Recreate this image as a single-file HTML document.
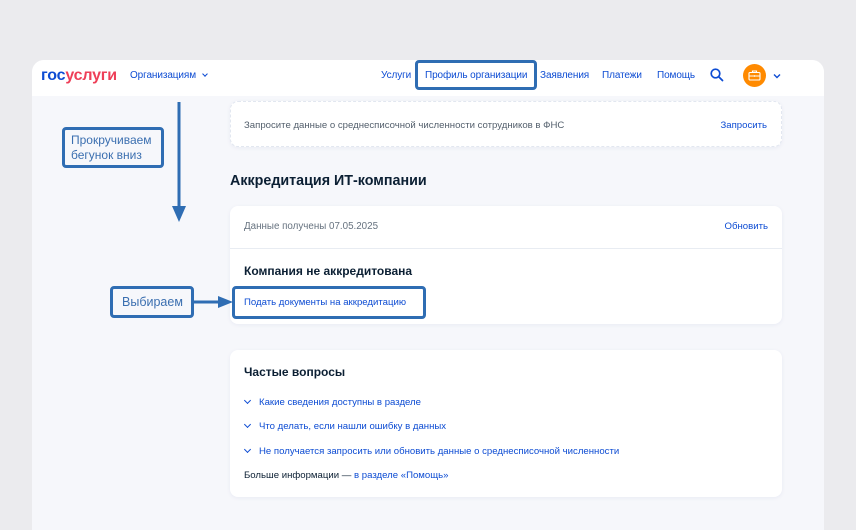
<!DOCTYPE html>
<html><head><meta charset="utf-8"><style>
*{margin:0;padding:0;box-sizing:border-box}
body{width:856px;height:522px;background:#ebebee;font-family:"Liberation Sans",sans-serif;position:relative;overflow:hidden;color:#0b1f33}
.win{position:absolute;left:32px;top:60px;width:792px;height:470px;background:#f6f7fb;border-radius:12px 12px 0 0;overflow:hidden}
.hdr{position:absolute;left:0;top:0;width:792px;height:36px;background:#fff}
.a{position:absolute;white-space:nowrap}
.nav{font-size:10px;color:#0d4cd3;top:10px;letter-spacing:-.1px}
.card{position:absolute;left:198px;width:552px;background:#fff;border-radius:8px;box-shadow:0 1px 4px rgba(0,40,120,.06)}
.lnk{color:#0d4cd3;font-size:9.6px}
.g{color:#66727f;font-size:9.8px}
.box{position:absolute;border:3px solid #2f6db3;border-radius:4px}
.ann{position:absolute;color:#3b6fb0;font-size:12px;line-height:15px}
.chev{display:inline-block;width:5px;height:5px;border-right:1.5px solid #0d4cd3;border-bottom:1.5px solid #0d4cd3;transform:rotate(45deg);margin-right:9px;position:relative;top:-2px}
</style></head><body>
<div class="win">
 <div class="hdr">
  <div class="a" style="left:9px;top:7px;font-size:16px;font-weight:bold;letter-spacing:-.2px"><span style="color:#0d4cd3">гос</span><span style="color:#ee3f58">услуги</span></div>
  <div class="a nav" style="left:98px">Организациям <span class="chev" style="width:4px;height:4px;margin-left:4px;margin-right:0"></span></div>
  <div class="a nav" style="left:349px">Услуги</div>
  <div class="a nav" style="left:393px">Профиль организации</div>
  <div class="a nav" style="left:508px">Заявления</div>
  <div class="a nav" style="left:570px">Платежи</div>
  <div class="a nav" style="left:625px">Помощь</div>
  <svg class="a" style="left:678px;top:8px" width="14" height="14" viewBox="0 0 14 14"><circle cx="5.5" cy="5.5" r="4.3" fill="none" stroke="#0d4cd3" stroke-width="1.7"/><path d="M8.7 8.7L12.5 12.5" stroke="#0d4cd3" stroke-width="1.8" stroke-linecap="round"/></svg>
  <div class="a" style="left:711px;top:4px;width:23px;height:23px;border-radius:50%;background:#ff8a00"></div>
  <svg class="a" style="left:716px;top:10px" width="13" height="11" viewBox="0 0 13 11"><rect x="1" y="2.5" width="11" height="7.5" rx="1" fill="none" stroke="#fff" stroke-width="1.1"/><path d="M4.5 2.5V1h4v1.5M1 6h11M6.5 5.2v1.6" stroke="#fff" stroke-width="1.1" fill="none"/></svg>
  <svg class="a" style="left:741px;top:13px" width="8" height="6" viewBox="0 0 8 6"><path d="M1 1.5L4 4.5L7 1.5" stroke="#0d4cd3" stroke-width="1.4" fill="none"/></svg>
 </div>
 <div class="card" style="top:41px;height:46px;border:1px dashed #e2e7f0">
  <div class="a g" style="left:13px;top:18px;color:#535f6c;font-size:9.6px">Запросите данные о среднесписочной численности сотрудников в ФНС</div>
  <div class="a lnk" style="right:14px;top:18px">Запросить</div>
 </div>
 <div class="a" style="left:198px;top:113px;font-size:14.3px;font-weight:bold">Аккредитация ИТ-компании</div>
 <div class="card" style="top:146px;height:118px">
  <div class="a g" style="left:14px;top:15px">Данные получены 07.05.2025</div>
  <div class="a lnk" style="right:14px;top:15px">Обновить</div>
  <div class="a" style="left:0;top:42px;width:552px;height:1px;background:#e8ecf2"></div>
  <div class="a" style="left:14px;top:58px;font-size:12px;font-weight:bold">Компания не аккредитована</div>
  <div class="a lnk" style="left:14px;top:91px">Подать документы на аккредитацию</div>
 </div>
 <div class="card" style="top:290px;height:147px">
  <div class="a" style="left:14px;top:15px;font-size:12px;font-weight:bold">Частые вопросы</div>
  <div class="a lnk" style="left:15px;top:47px"><span class="chev"></span>Какие сведения доступны в разделе</div>
  <div class="a lnk" style="left:15px;top:71px"><span class="chev"></span>Что делать, если нашли ошибку в данных</div>
  <div class="a lnk" style="left:15px;top:96px"><span class="chev"></span>Не получается запросить или обновить данные о среднесписочной численности</div>
  <div class="a" style="left:14px;top:120px;font-size:9.6px">Больше информации — <span style="color:#0d4cd3">в разделе «Помощь»</span></div>
 </div>
</div>
<div class="box" style="left:415px;top:60px;width:122px;height:30px"></div>
<div class="box" style="left:62px;top:127px;width:102px;height:41px"></div>
<div class="ann" style="left:71px;top:133px">Прокручиваем<br>бегунок вниз</div>
<div class="box" style="left:110px;top:286px;width:84px;height:32px"></div>
<div class="ann" style="left:122px;top:295px;font-size:12.5px">Выбираем</div>
<div class="box" style="left:232px;top:286px;width:194px;height:33px"></div>
<svg class="a" style="left:0;top:0" width="856" height="522"><path d="M179 102V210" stroke="#2f6db3" stroke-width="3"/><path d="M172 206L179 222L186 206Z" fill="#2f6db3"/><path d="M194 302H222" stroke="#2f6db3" stroke-width="3"/><path d="M218 296L233 302L218 308Z" fill="#2f6db3"/></svg>
</body></html>
